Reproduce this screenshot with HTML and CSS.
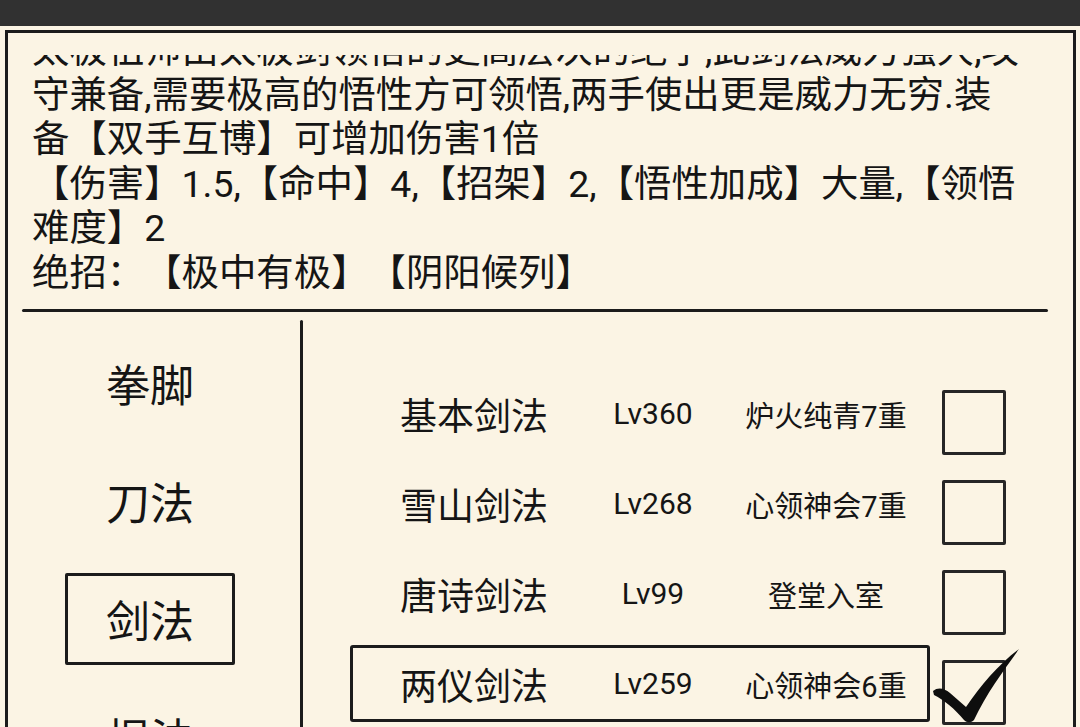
FILE: index.html
```html
<!DOCTYPE html>
<html lang="zh-CN">
<head>
<meta charset="utf-8">
<title>武学</title>
<link rel="stylesheet" href="styles.css">
</head>
<body>
<div class="statusbar"></div>
<main class="frame">
  <section class="desc">
    <div class="desc-scroll">
      <div class="desc-text">
        <p>太极祖师由太极剑领悟的更高层次的绝学,此剑法威力强大,攻守兼备,需要极高的悟性方可领悟,两手使出更是威力无穷.装备【双手互博】可增加伤害1倍</p>
        <p>【伤害】1.5,【命中】4,【招架】2,【悟性加成】大量,【领悟难度】2</p>
        <p>绝招：【极中有极】【阴阳候列】</p>
      </div>
    </div>
  </section>
  <hr class="rule">
  <section class="skills">
    <nav class="cats">
      <div class="cat">拳脚</div>
      <div class="cat">刀法</div>
      <div class="cat active">剑法</div>
      <div class="cat">棍法</div>
    </nav>
    <div class="vline"></div>
    <ul class="list">
      <li class="row">
        <div class="item"><span class="name">基本剑法</span><span class="lv">Lv360</span><span class="rank">炉火纯青7重</span></div>
        <span class="box"></span>
      </li>
      <li class="row">
        <div class="item"><span class="name">雪山剑法</span><span class="lv">Lv268</span><span class="rank">心领神会7重</span></div>
        <span class="box"></span>
      </li>
      <li class="row">
        <div class="item"><span class="name">唐诗剑法</span><span class="lv">Lv99</span><span class="rank">登堂入室</span></div>
        <span class="box"></span>
      </li>
      <li class="row">
        <div class="item selected"><span class="name">两仪剑法</span><span class="lv">Lv259</span><span class="rank">心领神会6重</span></div>
        <span class="box checked">
          <svg class="tick" viewBox="0 0 86 75" width="86" height="75">
            <path d="M0,43 C5,39 11,40 17,45 L33,59 C48,37 66,16 86,1 C71,22 53,46 41,72 C38,75 34,75 31,72 C22,61 11,52 1,47 Z" fill="#0e0e0e"/>
          </svg>
        </span>
      </li>
    </ul>
  </section>
</main>
</body>
</html>
```

FILE: styles.css
```css
html, body {
  margin: 0;
  padding: 0;
}

body {
  width: 1080px;
  height: 727px;
  overflow: hidden;
  background: #fbf4e4;
  color: #151515;
  font-family: Roboto, "Noto Sans CJK SC", sans-serif;
  text-spacing-trim: space-all;
}

.statusbar {
  height: 26px;
  background: #313131;
}

/* hand-drawn outer frame (open at the bottom) */
.frame {
  margin: 4px 4px 0 5px;
  height: 697px;
  box-sizing: border-box;
  border: 3px solid #1b1b1b;
  border-bottom: none;
  display: flex;
  flex-direction: column;
  overflow: hidden;
}

/* description block, scrolled part-way */
.desc {
  padding: 22px 47px 0 24px;
}

.desc-scroll {
  height: 242px;
  overflow: hidden;
}

.desc-text {
  margin-top: -27px;
}

.desc-text p {
  margin: 0;
  font-size: 37.4px;
  line-height: 44.5px;
}

.rule {
  margin: 12px 25px 0 14px;
  height: 3px;
  border: 0;
  background: #1b1b1b;
  border-radius: 2px;
  flex-shrink: 0;
}

.skills {
  flex: 1;
  display: flex;
  min-height: 0;
}

/* category tabs */
.cats {
  width: 292px;
  padding-top: 25px;
  box-sizing: border-box;
  display: flex;
  flex-direction: column;
  gap: 26px;
  flex-shrink: 0;
}

.cat {
  width: 170px;
  height: 92px;
  margin-left: 57px;
  box-sizing: border-box;
  border: 3px solid transparent;
  display: flex;
  align-items: center;
  justify-content: center;
  font-size: 44px;
  flex-shrink: 0;
}

.cat.active {
  border-color: #1b1b1b;
  border-radius: 2px;
}

.vline {
  width: 3px;
  margin-top: 8px;
  background: #1b1b1b;
  border-radius: 2px 2px 0 0;
  flex-shrink: 0;
}

/* skill list */
.list {
  list-style: none;
  margin: 0;
  padding: 63px 0 0 47px;
  display: flex;
  flex-direction: column;
  gap: 13px;
}

.row {
  display: flex;
  align-items: flex-start;
  gap: 12px;
  height: 77px;
  flex-shrink: 0;
}

.item {
  width: 580px;
  height: 77px;
  box-sizing: border-box;
  border: 3px solid transparent;
  padding-left: 47px;
  display: grid;
  grid-template-columns: 190px 126px 1fr;
  align-items: center;
}

.item.selected {
  border-color: #1b1b1b;
  border-radius: 3px;
}

.name {
  font-size: 37px;
}

.lv {
  font-size: 30px;
  text-align: center;
}

.rank {
  font-size: 29px;
  text-align: center;
  padding-left: 9px;
}

.box {
  position: relative;
  width: 64px;
  height: 65px;
  margin-top: 15px;
  box-sizing: border-box;
  border: 3px solid #262626;
  border-radius: 2px;
  flex-shrink: 0;
}

.tick {
  position: absolute;
  left: -12px;
  top: -15px;
}
```
